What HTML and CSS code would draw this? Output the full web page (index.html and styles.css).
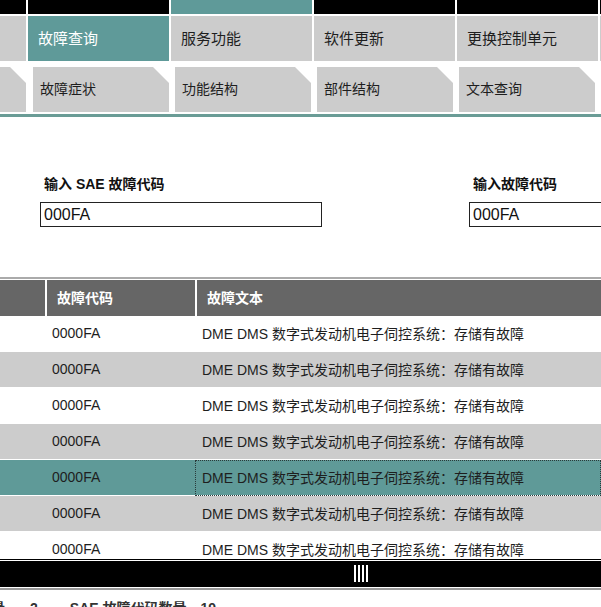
FILE: index.html
```html
<!DOCTYPE html>
<html lang="zh">
<head>
<meta charset="utf-8">
<title>故障查询</title>
<link rel="stylesheet" href="styles.css">
</head>
<body>
<div class="page">
  <div class="strip">
    <span class="seg part"></span>
    <span class="seg"></span>
    <span class="seg teal"></span>
    <span class="seg"></span>
    <span class="seg"></span>
    <span class="seg"></span>
  </div>
  <div class="maintabs">
    <div class="mtab part"></div>
    <div class="mtab active">故障查询</div>
    <div class="mtab">服务功能</div>
    <div class="mtab">软件更新</div>
    <div class="mtab">更换控制单元</div>
    <div class="mtab"></div>
  </div>
  <div class="subtabs">
    <div class="stab part"></div>
    <div class="stab">故障症状</div>
    <div class="stab">功能结构</div>
    <div class="stab">部件结构</div>
    <div class="stab">文本查询</div>
  </div>
  <div class="rule"></div>
  <div class="form">
    <div class="field first">
      <div class="label">输入 SAE 故障代码</div>
      <input class="input" type="text" value="000FA">
    </div>
    <div class="field second">
      <div class="label">输入故障代码</div>
      <input class="input" type="text" value="000FA">
    </div>
  </div>
  <div class="grayline"></div>
  <div class="thead">
    <div class="th c1"></div>
    <div class="th c2">故障代码</div>
    <div class="th c3">故障文本</div>
  </div>
  <div class="tbody">
    <div class="row"><div class="td c1"></div><div class="td c2">0000FA</div><div class="td c3">DME DMS 数字式发动机电子伺控系统<span class="fw">：</span>存储有故障</div></div>
    <div class="row alt"><div class="td c1"></div><div class="td c2">0000FA</div><div class="td c3">DME DMS 数字式发动机电子伺控系统<span class="fw">：</span>存储有故障</div></div>
    <div class="row"><div class="td c1"></div><div class="td c2">0000FA</div><div class="td c3">DME DMS 数字式发动机电子伺控系统<span class="fw">：</span>存储有故障</div></div>
    <div class="row alt"><div class="td c1"></div><div class="td c2">0000FA</div><div class="td c3">DME DMS 数字式发动机电子伺控系统<span class="fw">：</span>存储有故障</div></div>
    <div class="row sel"><div class="td c1"></div><div class="td c2">0000FA</div><div class="td c3 focus">DME DMS 数字式发动机电子伺控系统<span class="fw">：</span>存储有故障</div></div>
    <div class="row alt"><div class="td c1"></div><div class="td c2">0000FA</div><div class="td c3">DME DMS 数字式发动机电子伺控系统<span class="fw">：</span>存储有故障</div></div>
    <div class="row"><div class="td c1"></div><div class="td c2">0000FA</div><div class="td c3">DME DMS 数字式发动机电子伺控系统<span class="fw">：</span>存储有故障</div></div>
  </div>
  <div class="hscroll">
    <div class="track">
      <div class="grip"><i></i><i></i><i></i><i></i></div>
    </div>
  </div>
  <div class="status">
    <span class="s1">故障代码数量</span>
    <span class="s2">2</span>
    <span class="s3">SAE 故障代码数量</span>
    <span class="s4">19</span>
  </div>
</div>
</body>
</html>
```

FILE: styles.css
```css
html, body {
  margin: 0;
  padding: 0;
  background: #fff;
}
body {
  font-family: "Liberation Sans", "Noto Sans CJK SC", sans-serif;
  color: #222;
}
.page {
  width: 601px;
  height: 607px;
  overflow: hidden;
}

/* top strip */
.strip {
  display: flex;
  gap: 2px;
  height: 14px;
  margin-bottom: 2px;
}
.seg {
  flex: 0 0 141px;
  background: #000;
}
.seg.part { flex-basis: 26px; }
.seg.teal { background: #5f9a99; }

/* main tabs */
.maintabs {
  display: flex;
  gap: 2px;
  height: 45px;
}
.mtab {
  flex: 0 0 141px;
  box-sizing: border-box;
  background: #cccccc;
  padding-left: 10px;
  font-size: 15px;
  line-height: 45px;
  color: #1e1e1e;
  white-space: nowrap;
}
.mtab.part { flex-basis: 26px; }
.mtab.active {
  background: #5f9a99;
  color: #fff;
}

/* sub tabs */
.subtabs {
  display: flex;
  gap: 6px;
  height: 45px;
  margin-top: 6px;
}
.stab {
  flex: 0 0 136px;
  box-sizing: border-box;
  background: #cccccc;
  padding-left: 7px;
  font-size: 14px;
  line-height: 45px;
  color: #1e1e1e;
  white-space: nowrap;
  clip-path: polygon(0 0, calc(100% - 16px) 0, 100% 16px, 100% 100%, 0 100%);
}
.stab.part {
  flex-basis: 26px;
  margin-right: 1px;
}

.rule {
  height: 3px;
  margin-top: 2px;
  background: #6a9c96;
}

/* form */
.form {
  display: flex;
  height: 160px;
  box-sizing: border-box;
  padding-top: 59px;
  padding-left: 40px;
  gap: 147px;
}
.field {
  flex: 0 0 282px;
}
.label {
  font-size: 14px;
  font-weight: bold;
  line-height: 16px;
  padding-left: 4px;
  color: #111;
}
.input {
  display: block;
  box-sizing: border-box;
  width: 282px;
  height: 25px;
  margin: 10px 0 0;
  border: 1px solid #222;
  padding: 0 3px;
  font-family: "Liberation Sans", sans-serif;
  font-size: 16px;
  color: #111;
  background: #fff;
  outline: none;
}

.grayline {
  height: 2px;
  background: #aaaaaa;
  margin-bottom: 1px;
}

/* table */
.thead {
  display: flex;
  gap: 2px;
  height: 36px;
}
.th {
  background: #666666;
  color: #fff;
  font-weight: bold;
  font-size: 14px;
  line-height: 36px;
  padding-left: 10px;
  box-sizing: border-box;
  white-space: nowrap;
}
.th.c1 { flex: 0 0 45px; }
.th.c2 { flex: 0 0 148px; }
.th.c3 { flex: 1 1 auto; }

.tbody {
  height: 243px;
  overflow: hidden;
}
.row {
  display: grid;
  grid-template-columns: 47px 148px 1fr;
  height: 35px;
  border-bottom: 1px solid #fff;
  background: #fff;
  font-size: 14px;
  color: #1e1e1e;
}
.row.alt { background: #cccccc; }
.row.sel { background: #5f9a98; }
.td {
  line-height: 35px;
  white-space: nowrap;
  box-sizing: border-box;
}
.td.c2 { padding-left: 5px; }
.td.c3 { padding-left: 7px; }
.td.focus {
  border: 1px dotted #2a3a3a;
  padding-left: 6px;
  line-height: 33px;
}
.fw {
  font-family: "Noto Sans CJK TC", sans-serif;
}

/* horizontal scrollbar */
.hscroll {
  border-top: 1px solid #000;
  padding: 1px 0;
  border-bottom: 2px solid #999;
  background: #fff;
}
.track {
  height: 26px;
  background: #000;
  display: flex;
  align-items: flex-start;
}
.grip {
  display: flex;
  gap: 2px;
  margin-left: 354px;
  margin-top: 4px;
}
.grip i {
  display: block;
  width: 2px;
  height: 17px;
  background: #fff;
}

/* status */
.status {
  display: flex;
  margin-top: 10px;
  margin-left: -79px;
  font-size: 14px;
  font-weight: bold;
  line-height: 16px;
  color: #333;
  white-space: nowrap;
}
.s2 { margin-left: 25px; }
.s3 { margin-left: 32px; }
.s4 { margin-left: 14px; }
```
